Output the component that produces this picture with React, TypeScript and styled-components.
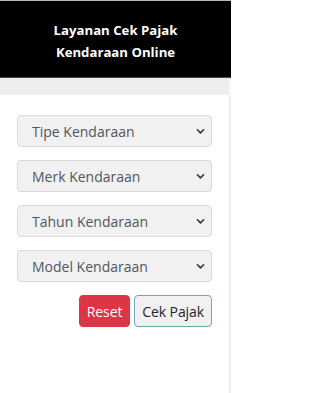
import React, {useState} from 'react'
import styled, {createGlobalStyle} from 'styled-components'

const GlobalStyle = createGlobalStyle`
  html, body {
    margin: 0;
    padding: 0;
    background: #fff;
  }
  body {
    font-family: "Open Sans", "Noto Sans", Arial, sans-serif;
  }
  * {
    box-sizing: border-box;
  }
`

const fields = ["Tipe Kendaraan", "Merk Kendaraan", "Tahun Kendaraan", "Model Kendaraan"]

export default function App() {
    const [values, setValues] = useState<string[]>(["", "", "", ""])

    const reset = () => setValues(["", "", "", ""])

    return (
        <>
            <GlobalStyle />
            <Page>
                <Header>
                    <Title>Layanan Cek Pajak<br />Kendaraan Online</Title>
                </Header>
                <Band />
                <Content>
                    <Form onSubmit={e => e.preventDefault()}>
                        {fields.map((label, i) => (
                            <SelectWrapper key={label}>
                                <Select
                                    value={values[i]}
                                    onChange={e => {
                                        const next = [...values]
                                        next[i] = e.target.value
                                        setValues(next)
                                    }}
                                >
                                    <option value="">{label}</option>
                                </Select>
                                <Chevron viewBox="0 0 16 16">
                                    <path d="M3.5 5.5 8 10l4.5-4.5" fill="none" stroke="#343a40" strokeWidth="2.4" strokeLinecap="round" strokeLinejoin="round" />
                                </Chevron>
                            </SelectWrapper>
                        ))}
                        <Actions>
                            <Button type="button" variant="danger" onClick={reset}>Reset</Button>
                            <Button type="submit" variant="light">Cek Pajak</Button>
                        </Actions>
                    </Form>
                </Content>
            </Page>
        </>
    )
}

const Page = styled.div`
  width: 231px;
  min-height: 393px;
  display: flex;
  flex-direction: column;
  border-top: 1px solid #b8b8b8;
`

const Header = styled.header`
  height: 77px;
  background: #000;
  display: flex;
  align-items: center;
  justify-content: center;
  border-bottom: 1px solid #4a4a4a;
`

const Title = styled.h1`
  margin: 0;
  padding-top: 4px;
  color: #fff;
  font-size: 13.2px;
  line-height: 22px;
  font-weight: 700;
  text-align: center;
`

const Band = styled.div`
  height: 17px;
  background: #eeeeee;
  border-right: 2px solid #f6f6f6;
`

const Content = styled.main`
  flex: 1;
  background: #fff;
  border-right: 2px solid #ececec;
  padding: 20px 17px 20px 17px;
`

const Form = styled.form`
  display: flex;
  flex-direction: column;
  gap: 13px;
`

const SelectWrapper = styled.div`
  position: relative;
  width: 195px;
`

const Select = styled.select`
  appearance: none;
  width: 100%;
  height: 32px;
  padding: 0 28px 0 14px;
  font-family: inherit;
  font-size: 14px;
  color: #50565d;
  background: #f1f1f1;
  border: 1px solid #dadada;
  border-radius: 4px;
  outline: none;
`

const Chevron = styled.svg`
  position: absolute;
  right: 6px;
  top: 11px;
  width: 11px;
  height: 11px;
  pointer-events: none;
`

const Actions = styled.div`
  display: flex;
  justify-content: flex-end;
  gap: 4px;
  width: 195px;
`

const Button = styled.button<{ variant: 'danger' | 'light' }>`
  height: 32px;
  padding: 0 7px;
  font-family: inherit;
  font-size: 14px;
  letter-spacing: -0.1px;
  border-radius: 4px;
  cursor: pointer;
  ${({ variant }) => variant === 'danger'
    ? `background: #dc3545; color: #fff; border: 1px solid #dc3545;`
    : `background: #f1f1f1; color: #212529; border: 1px solid #6ea8b2;`}
`
